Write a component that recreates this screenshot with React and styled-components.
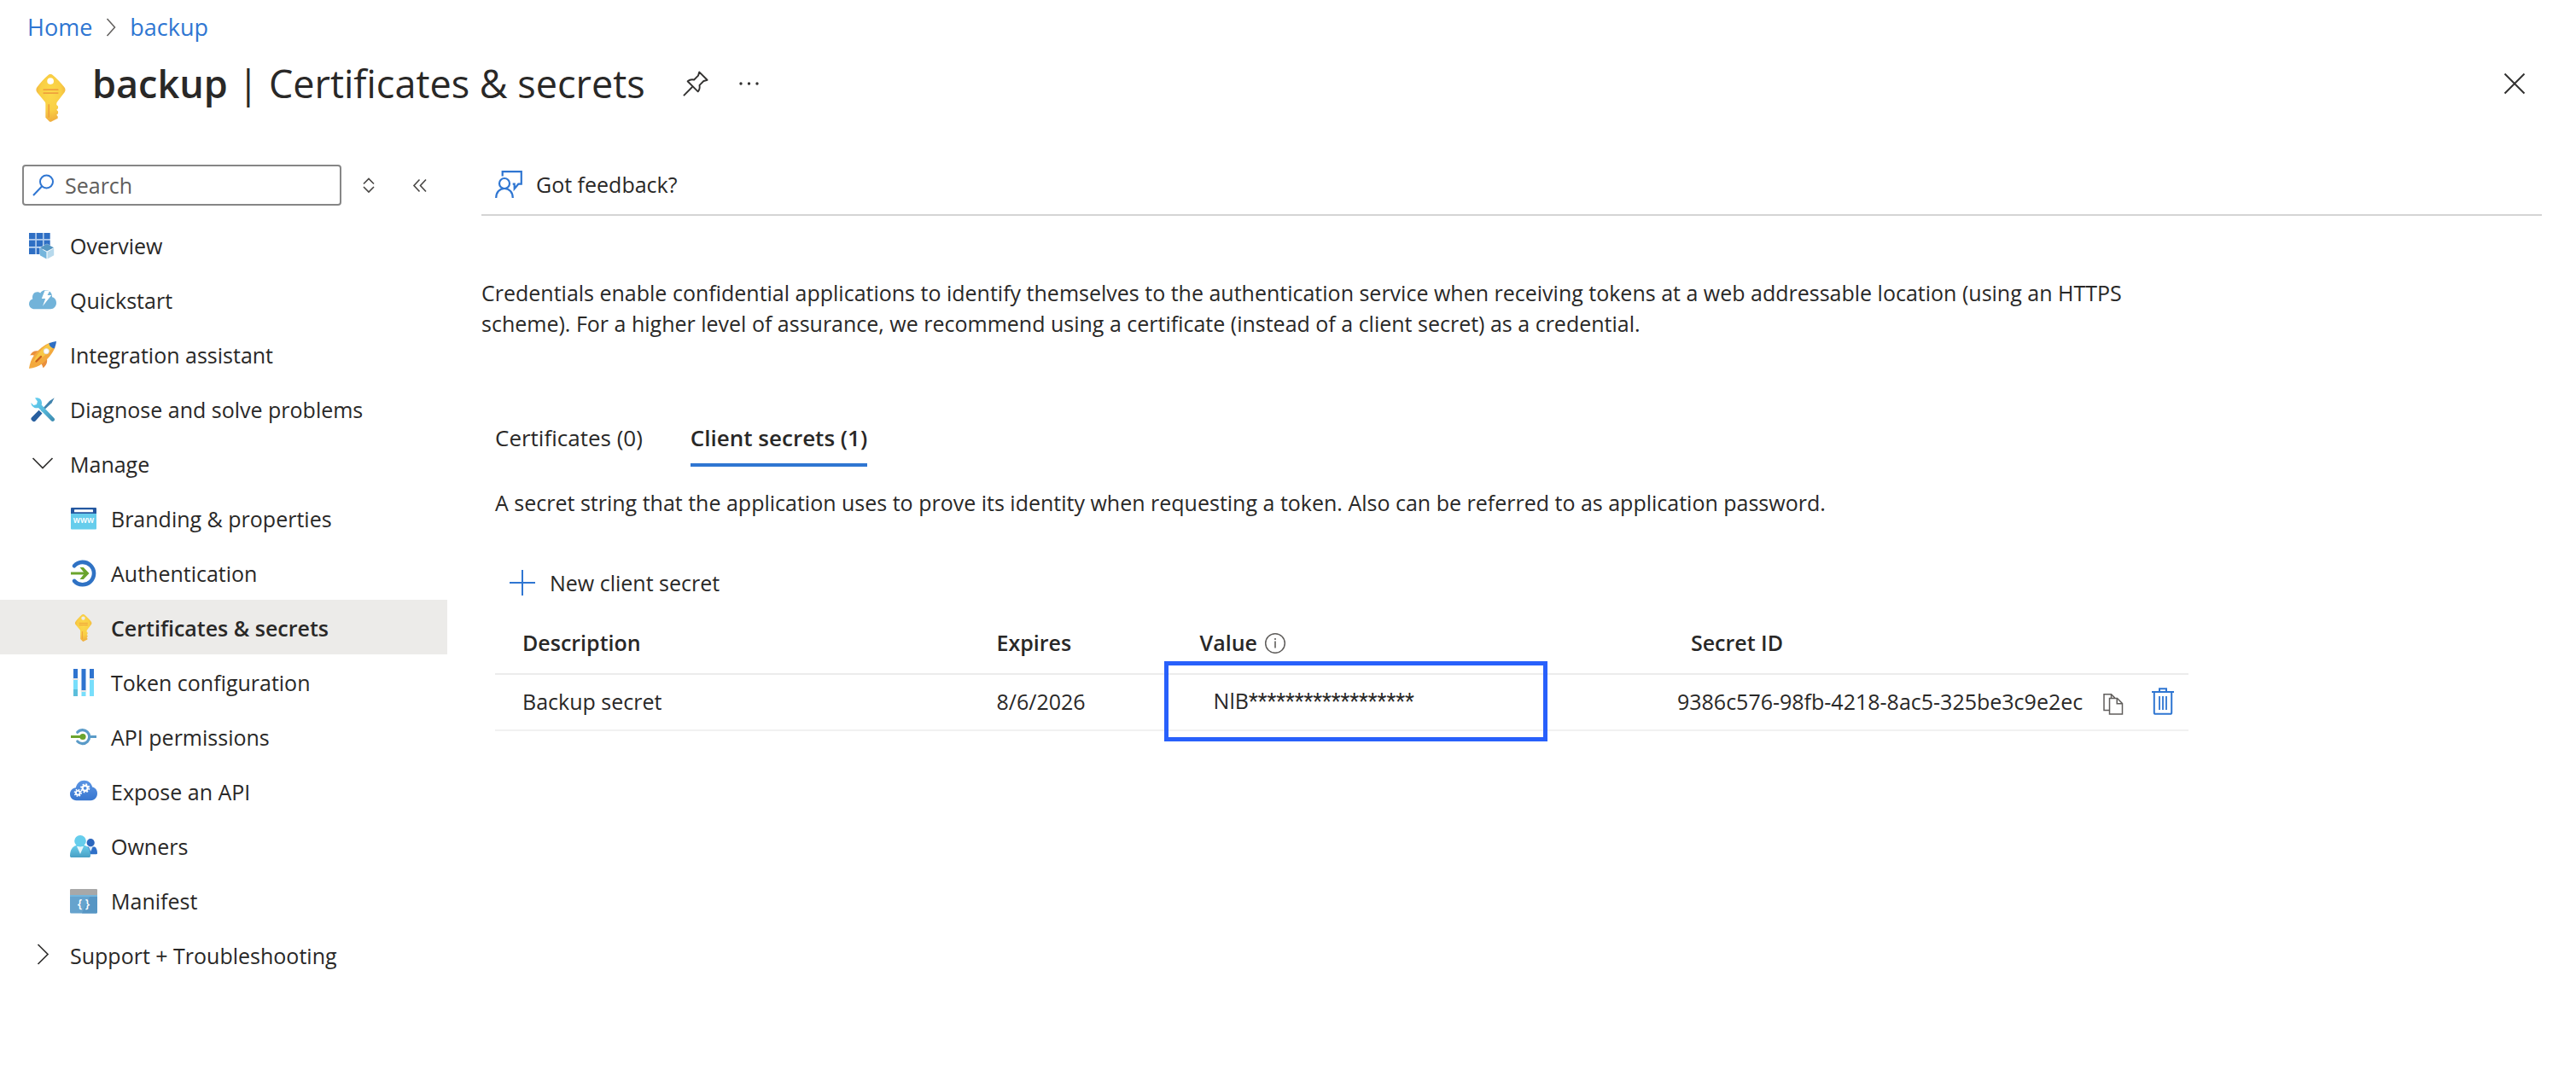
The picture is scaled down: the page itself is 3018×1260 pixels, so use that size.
import React from "react";
import styled, { createGlobalStyle, css } from "styled-components";

const color = {
  text: "#292827",
  muted: "#605e5c",
  link: "#2f76d2",
  line: "#d4d4d4",
  rowLine: "#ececec",
  selected: "#ecebe9",
  highlight: "#2860fb",
};

const GlobalStyle = createGlobalStyle`
  *, *::before, *::after { box-sizing: border-box; }
  body {
    margin: 0;
    background: #ffffff;
    color: ${color.text};
    font-family: "Open Sans", "Noto Sans", sans-serif;
    font-size: 25px;
    line-height: 36px;
  }
  button, input { font: inherit; color: inherit; }
  svg { display: block; flex: none; }
`;

const plainButton = css`
  display: flex;
  align-items: center;
  padding: 0;
  border: 0;
  background: none;
  cursor: pointer;
`;

const Breadcrumb = styled.nav`
  display: flex;
  align-items: center;
  gap: 14px;
  padding: 14px 32px 0;
  font-size: 27px;
`;

const CrumbLink = styled.a`
  color: ${color.link};
  text-decoration: none;
`;

const Header = styled.header`
  display: flex;
  align-items: flex-start;
  gap: 20px;
  padding: 16px 56px 0 32px;
  height: 114px;
`;

const HeaderIcon = styled.div`
  align-self: center;
`;

const Title = styled.h1`
  margin: 0;
  font-size: 45px;
  line-height: 64px;
  font-weight: 400;
`;

const TitleName = styled.span`
  font-weight: 600;
`;

const HeaderButton = styled.button`
  ${plainButton}
  height: 64px;
  margin-left: ${(p) => (p.$end ? "auto" : p.$first ? "24px" : "12px")};
`;

const Body = styled.div`
  display: flex;
  gap: 40px;
`;

const Sidebar = styled.aside`
  flex: none;
  width: 524px;
  padding-top: 29px;
`;

const SearchRow = styled.div`
  display: flex;
  align-items: center;
  padding-left: 26px;
  margin-bottom: 14px;
`;

const SearchBox = styled.label`
  display: flex;
  align-items: center;
  gap: 12px;
  width: 374px;
  height: 48px;
  padding: 0 10px;
  border: 2px solid #868686;
  border-radius: 4px;
`;

const SearchInput = styled.input`
  flex: 1;
  min-width: 0;
  padding: 0;
  border: 0;
  outline: 0;
  background: none;
  &::placeholder { color: ${color.muted}; opacity: 1; }
`;

const SmallButton = styled.button`
  ${plainButton}
  justify-content: center;
  width: 32px;
  height: 32px;
  margin-left: ${(p) => (p.$gap ? "28px" : "16px")};
`;

const NavList = styled.ul`
  margin: 0;
  padding: 0;
  list-style: none;
`;

const NavLink = styled.a`
  display: flex;
  align-items: center;
  gap: 16px;
  height: 64px;
  padding: 2px 16px 0 ${(p) => (p.$nested ? "82px" : "34px")};
  color: inherit;
  text-decoration: none;
  font-weight: ${(p) => (p.$selected ? 600 : 400)};
  background: ${(p) => (p.$selected ? color.selected : "transparent")};
`;

const Main = styled.main`
  flex: 1;
  min-width: 0;
  padding: 34px 40px 0 0;
`;

const CommandBar = styled.div`
  display: flex;
  padding: 0 16px 17px;
  border-bottom: 2px solid ${color.line};
`;

const CommandButton = styled.button`
  ${plainButton}
  gap: 16px;
  height: 36px;
`;

const Intro = styled.p`
  max-width: 1950px;
  margin: 72px 0 0;
`;

const Section = styled.section`
  max-width: 2000px;
  padding-left: 16px;
`;

const Tabs = styled.div`
  display: flex;
  gap: 56px;
  margin-top: 86px;
  font-size: 26px;
`;

const Tab = styled.button`
  ${plainButton}
  padding: 12px 0;
  border-bottom: 4px solid ${(p) => (p.$active ? color.link : "transparent")};
  font-weight: ${(p) => (p.$active ? 600 : 400)};
`;

const TabText = styled.p`
  margin: 24px 0 58px;
`;

const NewSecret = styled.div`
  display: flex;
  padding-left: 16px;
`;

const Table = styled.table`
  width: 100%;
  margin-top: 18px;
  table-layout: fixed;
  border-spacing: 0;
`;

const Column = styled.col`
  width: ${(p) => p.$width};
`;

const HeadCell = styled.th`
  padding: 16px 0 18px 32px;
  border-bottom: 2px solid ${color.rowLine};
  text-align: left;
  font-weight: 600;
`;

const HeadLabel = styled.span`
  display: flex;
  align-items: center;
  gap: 8px;
`;

const Cell = styled.td`
  position: relative;
  padding: 12px 0 14px ${(p) => p.$indent || "32px"};
  border-bottom: 2px solid #f1f1f1;
`;

const Mask = styled.span`
  font-family: Roboto, sans-serif;
`;

const Highlight = styled.span`
  position: absolute;
  top: -16px;
  left: -10px;
  width: 449px;
  height: 94px;
  border: 5px solid ${color.highlight};
  pointer-events: none;
`;

const SecretId = styled.div`
  display: flex;
  align-items: center;
  height: 36px;
`;

const RowButton = styled.button`
  ${plainButton}
  justify-content: center;
  width: 32px;
  height: 36px;
  margin-left: ${(p) => (p.$gap ? "26px" : "20px")};
`;

const Icon = ({ size = 32, box = 32, children }) => (
  <svg width={size} height={size} viewBox={`0 0 ${box} ${box}`} fill="none" aria-hidden="true">
    {children}
  </svg>
);

const KeyIcon = ({ size, id }) => (
  <Icon size={size}>
    <defs>
      <radialGradient id={id} cx="0.5" cy="0.4" r="0.6">
        <stop offset="0" stopColor="#fcd94a" />
        <stop offset="0.6" stopColor="#f9cf45" />
        <stop offset="1" stopColor="#efad3e" />
      </radialGradient>
    </defs>
    <path
      fill={`url(#${id})`}
      fillRule="evenodd"
      d="M14 .5a2.6 2.6 0 0 1 3 0C19.500 2.600 22.500 5.600 24.700 8.600a3 3 0 0 1 .2 3.500l-4.600 6c-.5.600-.7 1-.7 1.700v.7l1 .9v1.500l-1 1 1 1v1.400l-1 1 .8 1v1.200L16.400 31.500a1.200 1.200 0 0 1-1.700 0L12.200 29V19.900c0-.8-.2-1.200-.7-1.800l-5-6a3 3 0 0 1 .1-3.500C8.700 5.600 11.500 2.600 14 .5zM15.500 2.400a2.200 2.200 0 1 0 0 4.400 2.200 2.200 0 0 0 0-4.400z"
    />
    <path stroke="#efa13c" strokeWidth="1" strokeLinecap="round" d="M11 10.400h9.400M11 12.600h9.400M14.400 20.500v8" />
  </Icon>
);

const PinIcon = () => (
  <Icon size={30}>
    <g stroke="#323130" strokeWidth="2" strokeLinejoin="round">
      <path d="M20.500 1.500 30.500 11.500 26 12.800 20.800 18c.6 3.200.2 5.600-1.900 8L6 13.100c2.400-2.100 5-2.600 8-1.900l5.200-5.200z" />
      <path d="M12 20 1 31" />
    </g>
  </Icon>
);

const DotsIcon = () => (
  <Icon>
    <g fill="#323130">
      <circle cx="6" cy="16" r="1.700" />
      <circle cx="15.500" cy="16" r="1.700" />
      <circle cx="25" cy="16" r="1.700" />
    </g>
  </Icon>
);

const CloseIcon = () => (
  <Icon>
    <path d="M4.500 4.500 27.500 27.500M27.500 4.500 4.500 27.500" stroke="#323130" strokeWidth="2" />
  </Icon>
);

const CrumbChevron = () => (
  <svg width="16" height="24" viewBox="0 0 16 24" fill="none" aria-hidden="true">
    <path d="M3.500 2 12.500 12 3.500 22" stroke="#605e5c" strokeWidth="1.500" />
  </svg>
);

const SearchIcon = () => (
  <Icon size={26} box={26}>
    <g stroke={color.link} strokeWidth="2">
      <circle cx="16.500" cy="9" r="7.500" />
      <path d="M11 14.500 1 25" />
    </g>
  </Icon>
);

const SortIcon = () => (
  <Icon>
    <path d="M10 14.500 16 8.500 22 14.500M10 18 16 24 22 18" stroke="#484644" strokeWidth="1.600" />
  </Icon>
);

const CollapseIcon = () => (
  <Icon>
    <path d="M15.500 9.500 9 16.500 15.500 23.500M23 9.500 16.500 16.500 23 23.500" stroke="#484644" strokeWidth="1.600" />
  </Icon>
);

const ChevronDown = () => (
  <Icon>
    <path d="M4.500 9 16 20.500 27.500 9" stroke="#323130" strokeWidth="1.700" />
  </Icon>
);

const ChevronRight = () => (
  <Icon>
    <path d="M10.500 3 22 14.500 10.500 26" stroke="#323130" strokeWidth="1.700" />
  </Icon>
);

const OverviewIcon = () => (
  <Icon>
    <path
      fill="#2f6fc4"
      d="M0 1h7.500v7.300H0zM8.700 1h7.500v7.300H8.700zM17.400 1h7.300v7.300h-7.300zM0 9.600h7.500v7.500H0zM8.700 9.600h7.500v7.500H8.700zM17.400 9.600h7.300v7.500h-7.300zM0 18.500h7.500V26H0zM8.700 18.500h7.500V26H8.700z"
    />
    <path stroke="#7fb0e4" strokeWidth=".6" d="M8.100 1v25M16.800 1v14M0 9h24.700M0 17.800h14" />
    <path fill="#fff" d="M21 13.500l9 4.500v9.500l-9 4.500-9-4.500V18z" opacity=".5" />
    <path fill="#5596c2" d="M21 14l8 4.200-8 4.400-8-4.400z" />
    <path fill="#74b5dc" d="M12.800 19l7.700 4.300V31.500l-7.700-4.200z" />
    <path fill="#b7d9ec" d="M29.200 19l-7.700 4.300V31.500l7.700-4.200z" />
  </Icon>
);

const QuickstartIcon = () => (
  <Icon>
    <path
      fill="#72b3d9"
      d="M6.500 26.200C2.800 26.200 0 23.600 0 20.200c0-3 1.800-5 4.200-5.700C3.200 9.500 6 6.200 9.500 6.200c1.500 0 2.800.4 3.700 1.200C14.600 5.300 16.700 4 19.500 4c4.400 0 7.500 3.200 7.500 7.500v.8c3 .6 5 3.300 5 6.700 0 4-2.800 7.200-6.800 7.200z"
    />
    <path fill="#fff" d="M18.500 4.500 14.800 14h4.400l-3.200 8.800L26.300 10h-4.700l2.800-5.500z" />
  </Icon>
);

const RocketIcon = () => (
  <Icon>
    <path fill="#e98f3c" d="M10.500 11.200C6 10.800 3.200 12.500 1.200 16.400c2.800-.4 4.500-.2 6.500 1zM21 20.500c.8 4.500-.8 8-4.500 10.800-.8-2.600-1.400-4.200-2.800-5.800z" />
    <path fill="#f3a93e" d="M0 32C.8 26 2.800 20.500 6 16.200c5-6.600 11.500-12 19-14.800l5.600 5.500C27.500 14.400 22 20.900 15.800 26 11.600 29.400 6 31.400 0 32z" />
    <path fill="#f8c746" d="M5 24.500C9 15 16 7 24 2.200l4.500 4.500C22 14.500 15 20 5 24.500z" />
    <path fill="#2f6fc4" d="M32 0c-3.600.5-6.200 1.300-8.700 2.400.6 3 3 5.500 6.200 6.200C30.800 6.200 31.600 3.400 32 0z" />
    <path stroke="#c9611f" strokeWidth="2.400" strokeLinecap="round" d="M8.500 23.500 14 18" />
    <circle cx="20.300" cy="11.700" r="3.100" fill="#fff" stroke="#d9dbe6" strokeWidth=".8" />
  </Icon>
);

const ToolsIcon = () => (
  <Icon>
    <defs>
      <linearGradient id="wrench" x1="0" y1="0" x2="1" y2="1">
        <stop offset="0" stopColor="#67d2f4" />
        <stop offset=".5" stopColor="#56bbdd" />
        <stop offset="1" stopColor="#3c88ad" />
      </linearGradient>
    </defs>
    <path fill="#4183ad" d="M29.700 2.200 24 6l-10 11 1.600 1.600 11-10.300z" />
    <path fill="#285f9f" d="M11.500 16.800 15.500 20.500 7.500 29.500c-1 1-2.400.9-3.400 0l-1-1c-1-1-1-2.300 0-3.300z" />
    <path
      fill="url(#wrench)"
      d="M7 2.600c3.700-1.300 7.800 1 8 5.300.1 1-.1 1.900-.4 2.700L29.300 26c1 1.100 1 2.300 0 3.200-1 1-2.300 1-3.300 0L11 14c-4 1.300-8.400-1.300-8.600-6l3 2.900 3.500-.8 1-3.600z"
    />
  </Icon>
);

const BrandingIcon = () => (
  <Icon>
    <path fill="#66cdec" d="M1 9.500h30v18a1 1 0 0 1-1 1H2a1 1 0 0 1-1-1z" />
    <path fill="#2458a0" d="M2 3h28a1 1 0 0 1 1 1v6H1V4a1 1 0 0 1 1-1z" />
    <rect x="5" y="5.300" width="22" height="3" rx=".6" fill="#fff" />
    <text x="16" y="20.800" textAnchor="middle" fontFamily="Open Sans, sans-serif" fontWeight="600" fontSize="10" fill="#fff">
      www
    </text>
  </Icon>
);

const AuthIcon = () => (
  <Icon>
    <path stroke="#2f72c4" strokeWidth="4.600" strokeLinecap="round" d="M5 7.300a13.200 13.200 0 1 1 0 17.600" />
    <path stroke="#6ba42d" strokeWidth="3" d="M1 16h19" />
    <path fill="#6ba42d" d="M11.500 9h4.300l6.700 7-6.700 7h-4.300l5.600-7z" />
  </Icon>
);

const TokenIcon = () => (
  <Icon>
    <path fill="#2f74cf" d="M4 0h5v11H4zM13.500 0h5v25h-5zM23 0h5v11h-5z" />
    <path fill="#78defb" d="M4 12.500h5V32H4zM13.500 27h5v5h-5zM23 12.500h5V32h-5z" />
    <path fill="#5bbedb" d="M4 24h5v8H4z" />
    <path fill="#e6e6e6" d="M3.300 11h6.400v2H3.300zM12.800 25h6.400v2h-6.400zM22.300 11h6.400v2h-6.400z" />
  </Icon>
);

const ApiIcon = () => (
  <Icon>
    <path stroke="#5a9bc8" strokeWidth="3.200" strokeLinecap="round" d="M8.800 10.200A8 8 0 1 1 8.800 21" />
    <path stroke="#5a9bc8" strokeWidth="3" d="M23 15.500h8" />
    <path stroke="#6ba42d" strokeWidth="3" d="M1 15.500h12" />
    <circle cx="15" cy="15.500" r="3.600" fill="#6ba42d" />
  </Icon>
);

const ExposeIcon = () => (
  <Icon>
    <defs>
      <linearGradient id="cloud" x1="0" y1="0" x2="0" y2="1">
        <stop offset="0" stopColor="#5b95e4" />
        <stop offset="1" stopColor="#3876cf" />
      </linearGradient>
    </defs>
    <path
      fill="url(#cloud)"
      d="M7.500 26.200C3.200 26.200 0 23.200 0 18.800c0-4 2.800-7 6.800-7.500C8 6 11.800 2.700 16.500 2.700c5 0 8.700 3.200 9.700 7.800 3.600.7 5.800 3.700 5.800 7.500 0 4.600-3.200 8.200-7.500 8.200z"
    />
    <g stroke="#fff">
      <circle cx="17.700" cy="11.800" r="3" strokeWidth="2.200" />
      <circle cx="17.700" cy="11.800" r="4.700" strokeWidth="1.800" strokeDasharray="1.850 1.850" />
      <circle cx="9.300" cy="17.300" r="2.400" strokeWidth="1.900" />
      <circle cx="9.300" cy="17.300" r="3.900" strokeWidth="1.500" strokeDasharray="1.530 1.530" />
    </g>
  </Icon>
);

const OwnersIcon = () => (
  <Icon>
    <defs>
      <linearGradient id="owner" x1="0" y1="0" x2="0" y2="1">
        <stop offset="0" stopColor="#68cdec" />
        <stop offset="1" stopColor="#489fc4" />
      </linearGradient>
    </defs>
    <path fill="#2f70c8" d="M17 16.500h12c1.800 1 3 3.500 3 7.500 0 .8-.5 1.200-1.200 1.200H18z" />
    <path fill="#dceaf8" d="M21.500 16h5.400l-2.600 6z" />
    <circle cx="24.200" cy="11.700" r="4.600" fill="#2b66bd" />
    <path fill="url(#owner)" d="M7 15h10.500c4 1 6.500 5.500 6.500 12 0 1.400-.7 2-2 2H2c-1.300 0-2-.6-2-2 0-6.500 3-11 7-12z" />
    <path fill="#e8f6fb" d="M8 16h8l-4 9z" />
    <circle cx="12" cy="9.700" r="6.800" fill="#66cdec" />
  </Icon>
);

const ManifestIcon = () => (
  <Icon>
    <path fill="#66a3cd" d="M0 9h32v20a1.500 1.500 0 0 1-1.500 1.500h-29A1.500 1.500 0 0 1 0 29z" />
    <path fill="#5796c4" d="M24 9h8v20a1.500 1.500 0 0 1-1.500 1.500H14z" />
    <path fill="#a8a8a8" d="M1 2h30a1 1 0 0 1 1 1v6H0V3a1 1 0 0 1 1-1z" />
    <path fill="#74b5dc" d="M0 9h32v2H0z" />
    <text x="16" y="24" textAnchor="middle" fontFamily="Open Sans, sans-serif" fontWeight="600" fontSize="14" fill="#fff">
      {"{ }"}
    </text>
  </Icon>
);

const FeedbackIcon = () => (
  <Icon>
    <g stroke={color.link} strokeWidth="2.200">
      <circle cx="11" cy="15" r="6" />
      <path d="M1.200 32c0-6.500 4-11 9.800-11s9.800 4.500 9.800 11" />
      <path d="M8.700 6.500V1.200h22.100v14.500h-3.500l-4.600 5.500v-5.500h-2" />
    </g>
  </Icon>
);

const PlusIcon = () => (
  <Icon>
    <path d="M16 1v30M1 16h30" stroke={color.link} strokeWidth="2" />
  </Icon>
);

const InfoIcon = () => (
  <Icon size={26} box={26}>
    <circle cx="13" cy="14" r="11.300" stroke="#605e5c" strokeWidth="1.500" />
    <path d="M13 11.500v8M13 8v2" stroke="#605e5c" strokeWidth="1.600" />
  </Icon>
);

const CopyIcon = () => (
  <Icon>
    <g stroke="#605e5c" strokeWidth="1.500" transform="translate(3 7)">
      <path d="M8.500 19.500H2V.800h8.500l4.300 4.300" />
      <path d="M8.500 5.500h9l6 6V24h-15z" />
      <path d="M17.200 5.500v6.200h6.300M10.500 1v4.500" />
    </g>
  </Icon>
);

const TrashIcon = () => (
  <Icon>
    <g stroke={color.link} strokeWidth="2">
      <path d="M3 5h26M12 5V1.200h8V5" />
      <path d="M5.800 5v24.200a1.600 1.600 0 0 0 1.600 1.600h17.200a1.600 1.600 0 0 0 1.600-1.600V5" />
      <path d="M12 10v16M16 10v16M20 10v16" strokeWidth="1.800" />
    </g>
  </Icon>
);

const NAV = [
  { label: "Overview", icon: <OverviewIcon /> },
  { label: "Quickstart", icon: <QuickstartIcon /> },
  { label: "Integration assistant", icon: <RocketIcon /> },
  { label: "Diagnose and solve problems", icon: <ToolsIcon /> },
  { label: "Manage", icon: <ChevronDown /> },
  { label: "Branding & properties", icon: <BrandingIcon />, nested: true },
  { label: "Authentication", icon: <AuthIcon />, nested: true },
  { label: "Certificates & secrets", icon: <KeyIcon size={32} id="key-small" />, nested: true, selected: true },
  { label: "Token configuration", icon: <TokenIcon />, nested: true },
  { label: "API permissions", icon: <ApiIcon />, nested: true },
  { label: "Expose an API", icon: <ExposeIcon />, nested: true },
  { label: "Owners", icon: <OwnersIcon />, nested: true },
  { label: "Manifest", icon: <ManifestIcon />, nested: true },
  { label: "Support + Troubleshooting", icon: <ChevronRight /> },
];

export default function App() {
  return (
    <>
      <GlobalStyle />
      <Breadcrumb aria-label="Breadcrumb">
        <CrumbLink href="#home">Home</CrumbLink>
        <CrumbChevron />
        <CrumbLink href="#backup">backup</CrumbLink>
      </Breadcrumb>
      <Header>
        <HeaderIcon>
          <KeyIcon size={56} id="key-large" />
        </HeaderIcon>
        <Title>
          <TitleName>backup</TitleName> | Certificates &amp; secrets
        </Title>
        <HeaderButton $first aria-label="Pin">
          <PinIcon />
        </HeaderButton>
        <HeaderButton aria-label="More">
          <DotsIcon />
        </HeaderButton>
        <HeaderButton $end aria-label="Close">
          <CloseIcon />
        </HeaderButton>
      </Header>
      <Body>
        <Sidebar>
          <SearchRow>
            <SearchBox>
              <SearchIcon />
              <SearchInput type="text" placeholder="Search" aria-label="Search" />
            </SearchBox>
            <SmallButton aria-label="Expand all">
              <SortIcon />
            </SmallButton>
            <SmallButton $gap aria-label="Collapse menu">
              <CollapseIcon />
            </SmallButton>
          </SearchRow>
          <NavList>
            {NAV.map((item) => (
              <li key={item.label}>
                <NavLink
                  href="#"
                  $nested={item.nested}
                  $selected={item.selected}
                  aria-current={item.selected ? "page" : undefined}
                >
                  {item.icon}
                  {item.label}
                </NavLink>
              </li>
            ))}
          </NavList>
        </Sidebar>
        <Main>
          <CommandBar>
            <CommandButton>
              <FeedbackIcon />
              Got feedback?
            </CommandButton>
          </CommandBar>
          <Intro>
            Credentials enable confidential applications to identify themselves to the authentication service when
            receiving tokens at a web addressable location (using an HTTPS scheme). For a higher level of assurance, we
            recommend using a certificate (instead of a client secret) as a credential.
          </Intro>
          <Section>
            <Tabs role="tablist">
              <Tab role="tab" aria-selected="false">
                Certificates (0)
              </Tab>
              <Tab role="tab" aria-selected="true" $active>
                Client secrets (1)
              </Tab>
            </Tabs>
            <TabText>
              A secret string that the application uses to prove its identity when requesting a token. Also can be
              referred to as application password.
            </TabText>
            <NewSecret>
              <CommandButton>
                <PlusIcon />
                New client secret
              </CommandButton>
            </NewSecret>
            <Table>
              <colgroup>
                <Column $width="28%" />
                <Column $width="12%" />
                <Column $width="29%" />
                <Column $width="31%" />
              </colgroup>
              <thead>
                <tr>
                  <HeadCell>Description</HeadCell>
                  <HeadCell>Expires</HeadCell>
                  <HeadCell>
                    <HeadLabel>
                      Value <InfoIcon />
                    </HeadLabel>
                  </HeadCell>
                  <HeadCell>Secret ID</HeadCell>
                </tr>
              </thead>
              <tbody>
                <tr>
                  <Cell>Backup secret</Cell>
                  <Cell>8/6/2026</Cell>
                  <Cell $indent="48px">
                    NlB<Mask>******************</Mask>
                    <Highlight />
                  </Cell>
                  <Cell $indent="16px">
                    <SecretId>
                      9386c576-98fb-4218-8ac5-325be3c9e2ec
                      <RowButton aria-label="Copy to clipboard">
                        <CopyIcon />
                      </RowButton>
                      <RowButton $gap aria-label="Delete">
                        <TrashIcon />
                      </RowButton>
                    </SecretId>
                  </Cell>
                </tr>
              </tbody>
            </Table>
          </Section>
        </Main>
      </Body>
    </>
  );
}
